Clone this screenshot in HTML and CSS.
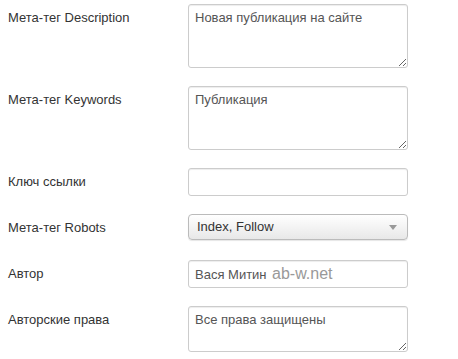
FILE: index.html
```html
<!DOCTYPE html>
<html lang="ru">
<head>
    <meta charset="UTF-8">
    <meta name="viewport" content="width=device-width, initial-scale=1.0">
    <title>Метаданные</title>
    <link rel="stylesheet" href="styles.css">
</head>
<body>

    <form class="form-horizontal">
        <div class="control-group">
            <label class="control-label" for="metadesc">Мета-тег Description</label>
            <div class="controls">
                <textarea id="metadesc" class="area-lg">Новая публикация на сайте</textarea>
            </div>
        </div>

        <div class="control-group">
            <label class="control-label" for="metakey">Мета-тег Keywords</label>
            <div class="controls">
                <textarea id="metakey" class="area-lg">Публикация</textarea>
            </div>
        </div>

        <div class="control-group">
            <label class="control-label" for="alias">Ключ ссылки</label>
            <div class="controls">
                <input type="text" id="alias">
            </div>
        </div>

        <div class="control-group group-select">
            <label class="control-label" for="robots">Мета-тег Robots</label>
            <div class="controls">
                <div class="select-box" id="robots">
                    <span>Index, Follow</span>
                    <b class="caret"></b>
                </div>
            </div>
        </div>

        <div class="control-group">
            <label class="control-label" for="author">Автор</label>
            <div class="controls watermarked">
                <input type="text" id="author" value="Вася Митин">
                <span class="watermark">ab-w.net</span>
            </div>
        </div>

        <div class="control-group">
            <label class="control-label" for="rights">Авторские права</label>
            <div class="controls">
                <textarea id="rights" class="area-sm">Все права защищены</textarea>
            </div>
        </div>
    </form>

</body>
</html>
```

FILE: styles.css
```css
body {
    margin: 0;
    padding: 4px 8px;
    background: #fff;
    font-family: "Liberation Sans", Arial, sans-serif;
    font-size: 13px;
    line-height: 18px;
    color: #333;
}
.control-group {
    display: grid;
    grid-template-columns: 180px 220px;
    margin-bottom: 18px;
}
.group-select {
    margin-bottom: 20px;
}
.control-label {
    padding-top: 5px;
}
.controls {
    position: relative;
}
textarea, input {
    display: block;
    box-sizing: border-box;
    width: 220px;
    margin: 0;
    padding: 4px 6px;
    border: 1px solid #ccc;
    border-radius: 3px;
    box-shadow: inset 0 1px 1px rgba(0, 0, 0, 0.075);
    font-family: inherit;
    font-size: 13px;
    line-height: 18px;
    color: #555;
    background: #fff;
}
input {
    height: 28px;
}
.area-lg {
    height: 64px;
}
.area-sm {
    height: 46px;
}
.select-box {
    box-sizing: border-box;
    height: 26px;
    padding: 3px 8px;
    border: 1px solid #bbb;
    border-radius: 4px;
    background: linear-gradient(#fff, #e8e8e8);
    box-shadow: 0 1px 1px rgba(0, 0, 0, 0.1);
    color: #333;
    display: flex;
    align-items: center;
    justify-content: space-between;
}
.caret {
    width: 0;
    height: 0;
    margin-right: 2px;
    border-left: 4px solid transparent;
    border-right: 4px solid transparent;
    border-top: 5px solid #999;
}
.watermark {
    position: absolute;
    left: 84px;
    top: 4px;
    font-size: 16px;
    line-height: 20px;
    color: #999;
}
```
